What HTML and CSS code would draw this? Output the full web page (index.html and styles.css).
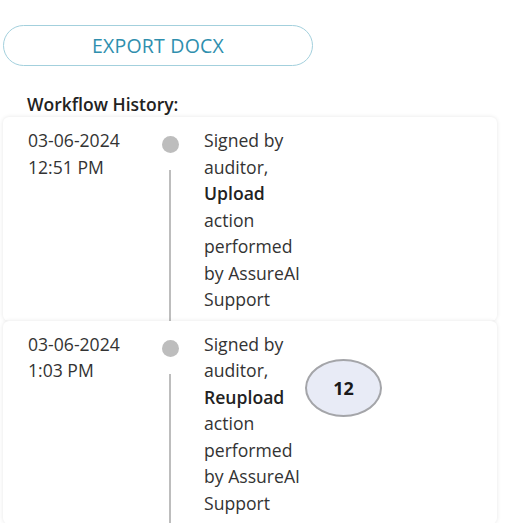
FILE: index.html
```html
<!DOCTYPE html>
<html>
<head>
<meta charset="utf-8">
<link rel="stylesheet" href="styles.css">
</head>
<body>
<div class="page">
  <button class="export-btn">EXPORT DOCX</button>
  <h2 class="section-title">Workflow History:</h2>
  <div class="history">
    <div class="entry">
      <div class="date">03-06-2024<br>12:51 PM</div>
      <div class="rail"><span class="dot"></span><span class="line"></span></div>
      <div class="desc">Signed by auditor, <b>Upload</b> action performed by AssureAI Support</div>
    </div>
    <div class="entry">
      <div class="date">03-06-2024<br>1:03 PM</div>
      <div class="rail"><span class="dot"></span><span class="line"></span></div>
      <div class="desc">Signed by auditor, <b>Reupload</b> action performed by AssureAI Support</div>
    </div>
  </div>
  <div class="badge">12</div>
</div>
</body>
</html>
```

FILE: styles.css
```css
html, body {
  margin: 0;
  padding: 0;
  background: #ffffff;
  overflow: hidden;
}
body {
  font-family: "Open Sans", "Liberation Sans", sans-serif;
  color: #333333;
}
.page {
  position: relative;
  padding: 25px 16px 0 3px;
  height: 498px;
}
.export-btn {
  display: block;
  width: 310px;
  height: 41px;
  border: 1.5px solid #a3d0dd;
  border-radius: 21px;
  background: #ffffff;
  color: #2f8fae;
  font-family: "Open Sans", "Liberation Sans", sans-serif;
  font-size: 19.5px;
  letter-spacing: 0.2px;
  padding: 0;
}
.section-title {
  margin: 0;
  padding: 26px 0 0 24px;
  font-size: 17.5px;
  font-weight: 600;
  line-height: 25px;
  color: #222222;
}
.history {
  display: flex;
  flex-direction: column;
  margin-top: 0;
}
.entry {
  display: flex;
  width: 494px;
  background: #ffffff;
  border-radius: 6px;
  box-shadow: 0 0 4px rgba(0, 0, 0, 0.10);
  padding: 10px 0 8px 25px;
  box-sizing: border-box;
  font-size: 17.6px;
  line-height: 26.5px;
}
.date {
  width: 133px;
}
.rail {
  width: 18px;
  display: flex;
  flex-direction: column;
  align-items: center;
  margin-bottom: -8px;
}
.dot {
  width: 17px;
  height: 17px;
  border-radius: 50%;
  background: #bdbdbd;
  margin-top: 9px;
  flex: none;
}
.line {
  width: 2px;
  flex: 1;
  background: #bdbdbd;
  margin-top: 17px;
}
.desc {
  width: 108px;
  margin-left: 25px;
}
.desc b {
  font-weight: 600;
  color: #222222;
}
.badge {
  position: absolute;
  left: 305px;
  top: 359px;
  width: 77px;
  height: 58px;
  box-sizing: border-box;
  border: 2px solid #a4a5a9;
  border-radius: 50%;
  background: #e8ebf6;
  display: flex;
  align-items: center;
  justify-content: center;
  font-family: "Open Sans", "Liberation Sans", sans-serif;
  font-weight: 700;
  font-size: 18px;
  color: #1a1a1a;
}
```
